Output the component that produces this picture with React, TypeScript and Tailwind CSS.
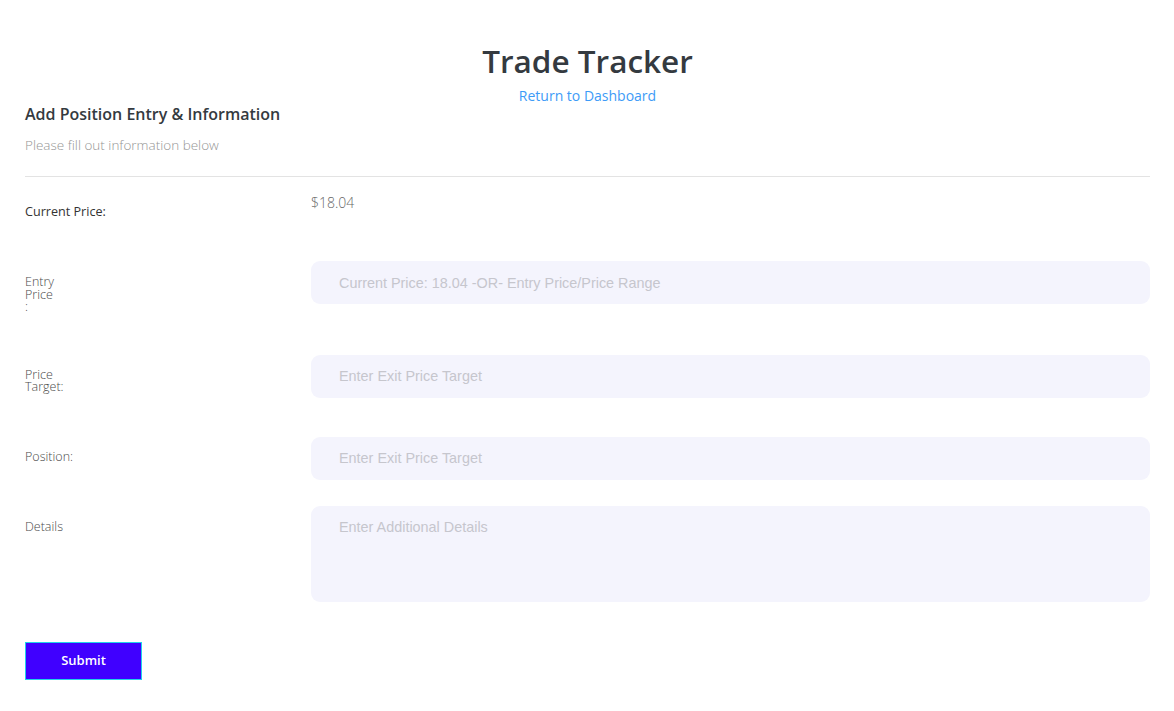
import React from 'react';

// Trade Tracker — add position form

interface FieldRowProps {
  label: React.ReactNode;
  labelPad: string;
  className?: string;
  children: React.ReactNode;
}

function FieldRow({ label, labelPad, className, children }: FieldRowProps) {
  return (
    <div className={`grid grid-cols-[286px_1fr] items-start ${className ?? ''}`}>
      <div className={`text-[12.5px] leading-[12.5px] font-light text-[#4a4a4a] ${labelPad}`}>{label}</div>
      <div>{children}</div>
    </div>
  );
}

const inputCls =
  "w-full h-[43px] rounded-[9px] bg-[#f4f4fd] pl-[28px] pr-4 text-[14.4px] text-[#444] font-['Liberation_Sans',Arial,sans-serif] placeholder:text-[#c6c6cd] outline-none";

export default function App() {
  return (
    <div className="min-h-screen bg-white pl-[25px] pr-[24px] pt-[42px] pb-8 font-['Open_Sans',sans-serif]">
      {/* Header */}
      <div className="flex flex-col items-center">
        <h1 className="text-[31.5px] leading-[38px] font-semibold text-[#343a40]">Trade Tracker</h1>
        <a href="#" className="mt-[9px] text-[14px] leading-[14px] text-[#3d9bf7]">
          Return to Dashboard
        </a>
      </div>

      <h2 className="mt-[1px] text-[16px] leading-[20px] font-semibold text-[#343a40]">
        Add Position Entry &amp; Information
      </h2>
      <p className="mt-[11px] text-[13.5px] leading-[20px] font-light text-[#959595]">
        Please fill out information below
      </p>

      <hr className="mt-[21px] border-0 border-t border-[#e3e3e3]" />

      {/* Current price */}
      <div className="mt-[16px] grid grid-cols-[286px_1fr] items-start">
        <div className="pt-[11px] text-[12.6px] leading-[16px] text-[#333]">Current Price:</div>
        <div className="text-[14px] leading-[20px] font-light text-[#666]">$18.04</div>
      </div>

      <FieldRow
        className="mt-[41px]"
        labelPad="pt-[15px]"
        label={
          <>
            Entry
            <br />
            Price
            <br />:
          </>
        }
      >
        <input className={inputCls} placeholder="Current Price: 18.04 -OR- Entry Price/Price Range" />
      </FieldRow>

      <FieldRow
        className="mt-[41px]"
        labelPad="pt-[14px]"
        label={
          <>
            Price
            <br />
            Target:
          </>
        }
      >
        <input className={inputCls} placeholder="Enter Exit Price Target" />
      </FieldRow>

      <FieldRow className="mt-[39px]" labelPad="pt-[14px]" label="Position:">
        <input className={inputCls} placeholder="Enter Exit Price Target" />
      </FieldRow>

      <FieldRow className="mt-[26px]" labelPad="pt-[15px]" label="Details">
        <textarea
          className="block w-full h-[96px] resize-none rounded-[9px] bg-[#f4f4fd] pl-[28px] pr-4 pt-[11px] text-[14.4px] leading-[20px] text-[#444] font-['Liberation_Sans',Arial,sans-serif] placeholder:text-[#c6c6cd] outline-none"
          placeholder="Enter Additional Details"
        />
      </FieldRow>

      <button className="mt-[40px] w-[117px] h-[38px] bg-[#4000ff] border border-[#1fd3ea] text-white text-[13px] font-semibold">
        Submit
      </button>
    </div>
  );
}
